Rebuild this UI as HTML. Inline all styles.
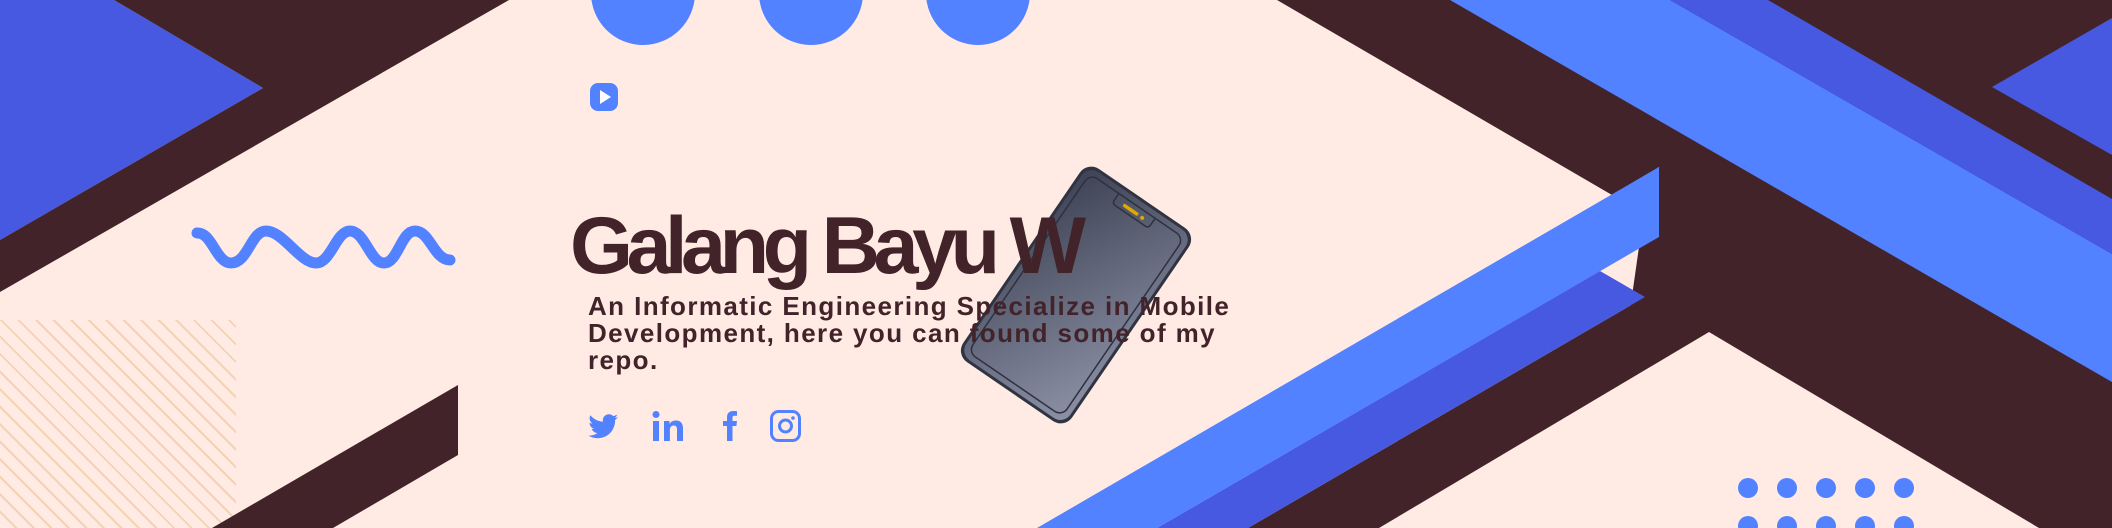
<!DOCTYPE html>
<html><head><meta charset="utf-8"><style>
html,body{margin:0;padding:0}
body{width:2112px;height:528px;overflow:hidden;background:#ffebe4;position:relative;font-family:"Liberation Sans",sans-serif}
.abs{position:absolute}
#hatch{left:0;top:320px;width:236px;height:208px;background:repeating-linear-gradient(45deg,transparent 0,transparent 10.4px,#f3d3b4 10.4px,#f3d3b4 12.4px)}
h1{position:absolute;left:570px;top:196px;margin:0;font-size:81px;font-weight:bold;color:#42232a;letter-spacing:-6.5px;white-space:nowrap;line-height:100px}
.sub{position:absolute;left:588px;top:293px;color:#42232a;font-weight:bold;font-size:26px;letter-spacing:1.4px;line-height:27px;white-space:nowrap}
</style></head><body>
<div id="hatch" class="abs"></div>
<svg class="abs" style="left:0;top:0" width="2112" height="528" viewBox="0 0 2112 528">
<polygon points="0,0 114,0 263,88 0,240" fill="#4659e0"/>
<polygon points="114,0 509,0 0,292 0,240 263,88" fill="#42232a"/>
<polygon points="458,385 458,455 333,528 212,528" fill="#42232a"/>
<circle cx="643" cy="-7" r="52" fill="#5282ff"/>
<circle cx="811" cy="-7" r="52" fill="#5282ff"/>
<circle cx="978" cy="-7" r="52" fill="#5282ff"/>
<rect x="590" y="83" width="28" height="28" rx="8" fill="#5282ff"/>
<polygon points="600,90 611,97 600,104" fill="#fff"/>
<path d="M197,233 C212,232 216,263 231,263 C248,263 251,231 266,231 C283,231 300,263 316,263 C331,263 336,231 350,231 C365,231 370,263 384,263 C398,263 401,231 415,231 C430,231 434,260 450,260" fill="none" stroke="#5282ff" stroke-width="11" stroke-linecap="round"/>
<polygon points="1277,0 2112,0 2112,528 1248,528 1645,297 1670,240 1659,167 1612,195" fill="#42232a"/>
<polygon points="1630,310 1730,260 1730,150 1650,170" fill="#42232a"/>
<polygon points="1709,332 1379,528 2039,528" fill="#ffebe4"/>
<polygon points="1450,0 1670,0 2112,254 2112,382" fill="#5282ff"/>
<polygon points="1670,0 1768,0 2112,199 2112,254" fill="#4659e0"/>
<polygon points="2112,18 1992,87 2112,155" fill="#4659e0"/>
<polygon points="1157,528 1600,271 1645,297 1248,528" fill="#4659e0"/>
<polygon points="1037,528 1659,167 1659,237 1157,528" fill="#5282ff"/>
<g fill="#5282ff">
<circle cx="1748" cy="488" r="10"/><circle cx="1787" cy="488" r="10"/><circle cx="1826" cy="488" r="10"/><circle cx="1865" cy="488" r="10"/><circle cx="1904" cy="488" r="10"/>
<circle cx="1748" cy="526" r="10"/><circle cx="1787" cy="526" r="10"/><circle cx="1826" cy="526" r="10"/><circle cx="1865" cy="526" r="10"/><circle cx="1904" cy="526" r="10"/>
</g>
<defs><linearGradient id="pg" x1="0" y1="0" x2="1" y2="1"><stop offset="0" stop-color="#3d4254"/><stop offset="1" stop-color="#8d91a6"/></linearGradient></defs>
<g transform="translate(1076,295) rotate(34.4)">
<rect x="-66" y="-117" width="132" height="234" rx="14" fill="#2f3342"/>
<rect x="-63" y="-114" width="126" height="228" rx="12" fill="url(#pg)"/>
<rect x="-57" y="-108" width="114" height="216" rx="9" fill="none" stroke="#2d3140" stroke-width="1.5"/>
<path d="M-22,-108 L-22,-100 Q-22,-96 -18,-96 L18,-96 Q22,-96 22,-100 L22,-108" fill="none" stroke="#2d3140" stroke-width="1.5"/>
<rect x="-12" y="-103" width="18" height="3.5" rx="1.7" fill="#e0a800"/>
<circle cx="11" cy="-101" r="2" fill="#e0a800"/>
</g>
<g fill="#5282ff">
<path d="M618,417 c-1,.5 -2.3,.8 -3.5,1 c1.3,-.8 2.2,-2 2.7,-3.4 c-1.2,.7 -2.5,1.2 -3.9,1.5 c-1.1,-1.2 -2.7,-1.9 -4.4,-1.9 c-3.4,0 -6.1,2.7 -6.1,6.1 c0,.5 0,1 .2,1.4 c-5.1,-.3 -9.6,-2.7 -12.6,-6.4 c-.5,.9 -.8,2 -.8,3.1 c0,2.1 1.1,4 2.7,5.1 c-1,0 -1.9,-.3 -2.8,-.8 c0,3 2.1,5.5 4.9,6 c-.5,.1 -1.1,.2 -1.6,.2 c-.4,0 -.8,0 -1.1,-.1 c.8,2.4 3,4.2 5.7,4.2 c-2.1,1.6 -4.7,2.6 -7.6,2.6 c-.5,0 -1,0 -1.5,-.1 c2.7,1.7 5.9,2.7 9.4,2.7 c11.2,0 17.4,-9.3 17.4,-17.4 l0,-.8 c1.2,-.9 2.2,-1.9 3,-3.1z"/>
<circle cx="656" cy="414.5" r="3.5"/>
<rect x="653" y="421" width="6" height="20"/>
<path d="M664,421 h5.5 v3 c1.3,-2.2 3.5,-3.5 6.5,-3.5 c4.5,0 7,2.8 7,8 v12.5 h-6 v-11.5 c0,-2.6 -1,-4 -3.3,-4 c-2.6,0 -3.8,1.8 -3.8,4.6 v10.9 h-5.9z"/>
<path d="M727,441 v-15 h-4 v-5 h4 v-3.5 c0,-4.3 2.2,-6.5 6.5,-6.5 c1.5,0 2.8,.1 3.5,.2 v4.6 h-2.5 c-1.8,0 -2,1 -2,2.3 v2.9 h4.5 l-.6,5 h-3.9 v15z"/>
</g>
<rect x="771.5" y="411.5" width="28" height="29" rx="7" fill="none" stroke="#5282ff" stroke-width="3"/>
<circle cx="785.5" cy="426" r="6" fill="none" stroke="#5282ff" stroke-width="3"/>
<circle cx="793" cy="418" r="1.8" fill="#5282ff"/>
</svg>
<h1>Galang Bayu W</h1>
<div class="sub">An Informatic Engineering Specialize in Mobile<br>Development, here you can found some of my<br>repo.</div>
</body></html>
